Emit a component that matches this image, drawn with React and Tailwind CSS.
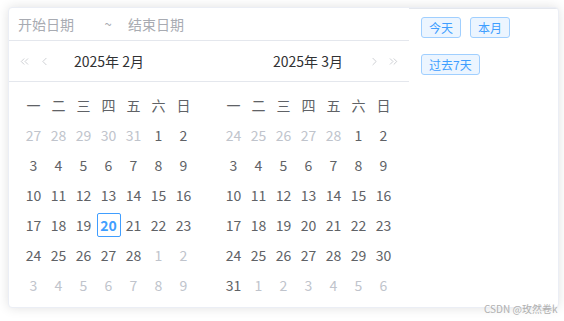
import React from 'react';
import { ChevronLeft, ChevronRight, ChevronsLeft, ChevronsRight } from 'lucide-react';

const WEEK = ['一', '二', '三', '四', '五', '六', '日'];

const buildMonth = (prevDays, count, nextCount) => [
  ...prevDays.map((d) => ({ d, muted: true })),
  ...Array.from({ length: count }, (_, i) => ({ d: i + 1, muted: false })),
  ...Array.from({ length: nextCount }, (_, i) => ({ d: i + 1, muted: true })),
];

const feb = buildMonth([27, 28, 29, 30, 31], 28, 9);
const mar = buildMonth([24, 25, 26, 27, 28], 31, 6);

const MonthGrid = ({ days, today }) => (
  <div className="w-[200px] pl-[12px] pr-[13px] pt-[8px]">
    <div className="grid grid-cols-7">
      {WEEK.map((w) => (
        <div key={w} className="h-[30px] flex items-center justify-center text-[14px] text-[#606266]">
          {w}
        </div>
      ))}
      {days.map((c, i) => {
        const isToday = !c.muted && c.d === today;
        return (
          <div key={i} className="h-[30px] flex items-center justify-center">
            {isToday ? (
              <span className="w-[24px] h-[24px] flex items-center justify-center border border-[#409eff] rounded-[2px] text-[14px] font-bold text-[#409eff]">
                {c.d}
              </span>
            ) : (
              <span className={`text-[14px] ${c.muted ? 'text-[#c0c4cc]' : 'text-[#606266]'}`}>{c.d}</span>
            )}
          </div>
        );
      })}
    </div>
  </div>
);

const Shortcut = ({ children }) => (
  <button className="h-[21px] px-[7px] flex items-center rounded-[3px] border border-[#a0cfff] bg-[#ecf5ff] text-[12px] text-[#409eff] leading-none">
    {children}
  </button>
);

export default function App() {
  return (
    <div
      className="relative w-[564px] h-[321px] bg-white pt-[7px] pl-[8px]"
      style={{ fontFamily: '"Noto Sans CJK SC", "Noto Sans", sans-serif' }}
    >
      <div className="w-[551px] h-[301px] flex bg-white rounded-[4px] border border-[#ebeef5] shadow-[0_0_12px_rgba(0,0,0,0.12)] overflow-hidden">
        {/* picker */}
        <div className="w-[400px] flex flex-col">
          <div className="h-[33px] flex items-center border-b border-[#e4e7ed] text-[14px] text-[#a8abb2]">
            <span className="ml-[9px]">开始日期</span>
            <span className="ml-[24px] w-[20px] text-center text-[13px] text-[#a8abb2]">~</span>
            <span className="ml-[10px]">结束日期</span>
          </div>
          <div className="h-[41px] flex items-center border-b border-[#e4e7ed] text-[#b4b7bd]">
            <div className="w-[200px] flex items-center">
              <ChevronsLeft size={13} strokeWidth={1.2} className="ml-[9px]" />
              <ChevronLeft size={13} strokeWidth={1.2} className="ml-[7px]" />
              <span className="ml-[23px] text-[14px] text-[#303133]">2025年 2月</span>
            </div>
            <div className="w-[200px] flex items-center">
              <span className="ml-[64px] text-[14px] text-[#303133]">2025年 3月</span>
              <ChevronRight size={13} strokeWidth={1.2} className="ml-[25px]" />
              <ChevronsRight size={13} strokeWidth={1.2} className="ml-[6px]" />
            </div>
          </div>
          <div className="flex">
            <MonthGrid days={feb} today={20} />
            <MonthGrid days={mar} today={null} />
          </div>
        </div>
        {/* shortcuts */}
        <div className="flex-1 border-t border-[#e4e7ed] pl-[12px] pt-[8px]">
          <div className="flex flex-wrap gap-x-[9px] gap-y-[16px]">
            <Shortcut>今天</Shortcut>
            <Shortcut>本月</Shortcut>
            <Shortcut>过去7天</Shortcut>
          </div>
        </div>
      </div>
      <span className="absolute left-[484px] top-[302px] whitespace-nowrap text-[10px] leading-[14px] text-[#b0b0b0]">
        CSDN @玫然卷k
      </span>
    </div>
  );
}
